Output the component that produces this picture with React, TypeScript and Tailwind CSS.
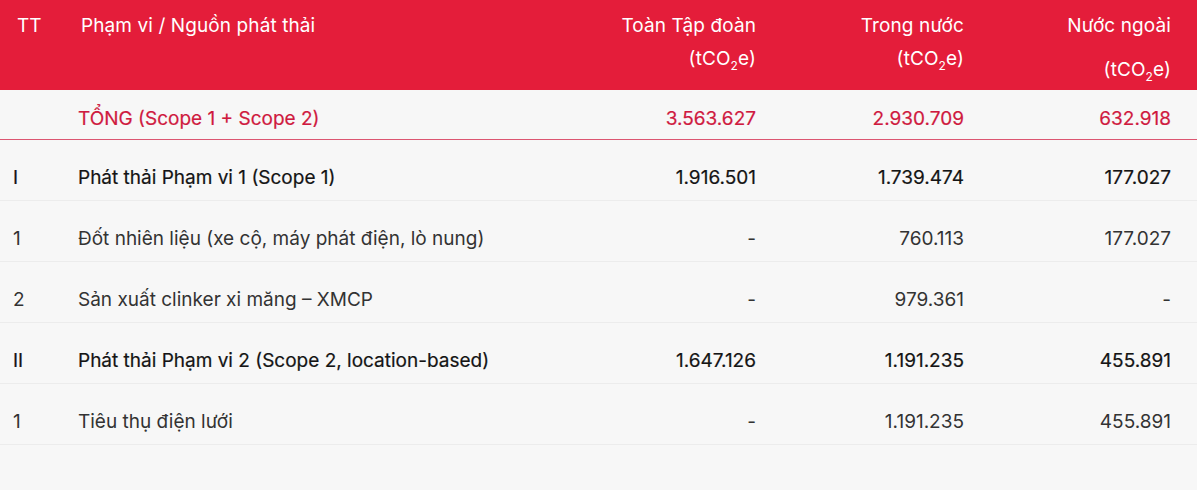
import React from 'react';

type Row = {
  tt: string;
  name: string;
  total: string;
  domestic: string;
  foreign: string;
  bold?: boolean;
};

const rows: Row[] = [
  { tt: 'I', name: 'Phát thải Phạm vi 1 (Scope 1)', total: '1.916.501', domestic: '1.739.474', foreign: '177.027', bold: true },
  { tt: '1', name: 'Đốt nhiên liệu (xe cộ, máy phát điện, lò nung)', total: '-', domestic: '760.113', foreign: '177.027' },
  { tt: '2', name: 'Sản xuất clinker xi măng – XMCP', total: '-', domestic: '979.361', foreign: '-' },
  { tt: 'II', name: 'Phát thải Phạm vi 2 (Scope 2, location-based)', total: '1.647.126', domestic: '1.191.235', foreign: '455.891', bold: true },
  { tt: '1', name: 'Tiêu thụ điện lưới', total: '-', domestic: '1.191.235', foreign: '455.891' },
];

const cols = 'grid grid-cols-[65px_509px_208px_208px_207px]';
// medium weight look: regular face thickened a little
const medium = 'font-normal [-webkit-text-stroke:0.2px_currentColor]';

function Unit() {
  return (
    <span>
      (tCO<sub className="text-[12px] align-[-2px]">2</sub>e)
    </span>
  );
}

export default function App() {
  return (
    <div className="w-[1200px] h-[490px] bg-white text-[19px]" style={{ fontFamily: 'Inter, "Noto Sans", sans-serif' }}>
      <div className="w-[1197px] h-[490px] bg-[#f7f7f7]">
        {/* header */}
        <div className={`${cols} h-[90px] bg-[#e41d3a] text-white leading-[33px] pt-[9px] tracking-[0.1px]`}>
          <div className="pl-[17px]">TT</div>
          <div className="pl-[16px]">Phạm vi / Nguồn phát thải</div>
          <div className="pr-[26px] text-right">
            <div>Toàn Tập đoàn</div>
            <Unit />
          </div>
          <div className="pr-[26px] text-right">
            <div>Trong nước</div>
            <Unit />
          </div>
          <div className="pr-[26px] text-right">
            <div>Nước ngoài</div>
            <div className="mt-[11px]"><Unit /></div>
          </div>
        </div>

        {/* tổng */}
        <div className={`${cols} pt-[17px] pb-[8px] leading-[24px] ${medium} text-[#cf1a3f]`}>
          <div className="pl-[13px]"></div>
          <div className="pl-[13px]">TỔNG (Scope 1 + Scope 2)</div>
          <div className="pr-[26px] text-right">3.563.627</div>
          <div className="pr-[26px] text-right">2.930.709</div>
          <div className="pr-[26px] text-right">632.918</div>
        </div>
        <div className="h-px bg-[#dc5671]" />

        {rows.map((r, i) => (
          <div key={i}>
            <div
              className={`${cols} pt-[26px] pb-[10px] leading-[24px] ${r.bold ? `${medium} text-[#141414]` : 'text-[#333333]'}`}
            >
              <div className="pl-[13px]">{r.tt}</div>
              <div className="pl-[13px]">{r.name}</div>
              <div className="pr-[26px] text-right">{r.total}</div>
              <div className="pr-[26px] text-right">{r.domestic}</div>
              <div className="pr-[26px] text-right">{r.foreign}</div>
            </div>
            <div className="h-px bg-[#ececec]" />
          </div>
        ))}
      </div>
    </div>
  );
}
